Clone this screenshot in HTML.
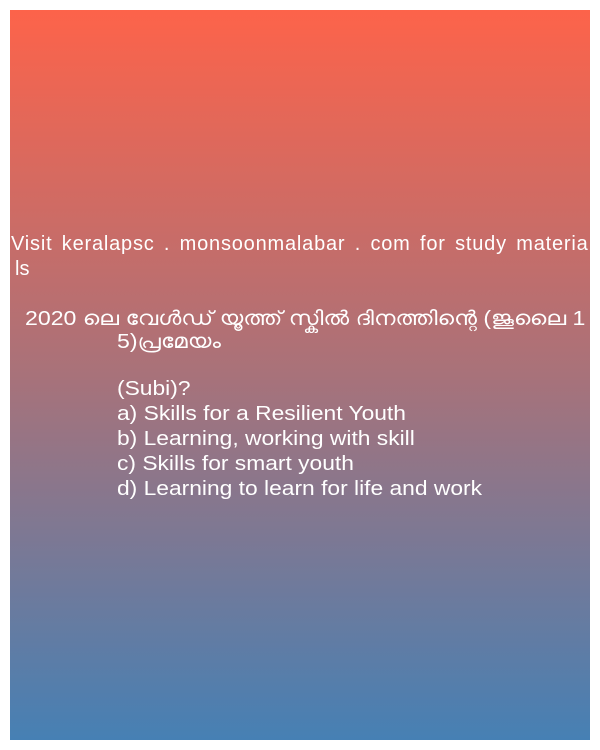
<!DOCTYPE html>
<html><head><meta charset="utf-8"><style>
html,body{margin:0;padding:0;background:#fff;width:600px;height:750px;overflow:hidden}
.box{position:absolute;left:10px;top:10px;width:580px;height:730px;background:linear-gradient(to bottom,#fd634a 0%,#a8727a 50%,#4680b4 100%)}
.l{position:absolute;color:#fff;font-family:"Liberation Sans","DejaVu Sans",sans-serif;font-size:20px;line-height:25px;white-space:nowrap;transform-origin:0 0}
.o{transform:scaleX(1.14)}
.m{transform:scaleX(1.155)}
</style></head><body>
<div class="box"></div>
<div class="l" style="left:11px;top:232px;letter-spacing:0.8px;word-spacing:3px">Visit keralapsc . monsoonmalabar . com for study materia</div>
<div class="l" style="left:15px;top:257px">ls</div>
<div class="l m" style="left:25px;top:307px">2020 ലെ  വേൾഡ് യൂത്ത് സ്കിൽ ദിനത്തിന്റെ (ജൂലൈ 1</div>
<div class="l m" style="left:117px;top:330px">5)പ്രമേയം</div>
<div class="l o" style="left:117px;top:377px">(Subi)?</div>
<div class="l o" style="left:117px;top:402px">a) Skills for a Resilient Youth</div>
<div class="l o" style="left:117px;top:427px">b) Learning, working with skill</div>
<div class="l o" style="left:117px;top:452px">c) Skills for smart youth</div>
<div class="l o" style="left:117px;top:477px">d) Learning to learn for life and work</div>
</body></html>
